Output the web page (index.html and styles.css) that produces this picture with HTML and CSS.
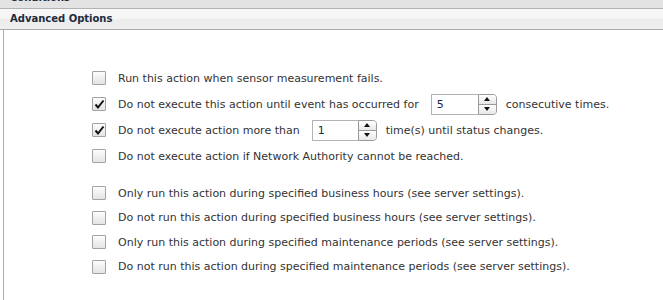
FILE: index.html
```html
<!DOCTYPE html>
<html lang="en">
<head>
    <meta charset="UTF-8">
    <title>Advanced Options</title>
    <link rel="stylesheet" href="styles.css">
</head>
<body>
    <div class="section-head prev">Conditions</div>
    <div class="section-head">Advanced Options</div>

    <div class="section-body">
        <div class="group">
            <label class="opt">
                <span class="box"></span>
                <span>Run this action when sensor measurement fails.</span>
            </label>
            <label class="opt">
                <span class="box checked"><svg width="11" height="11" viewBox="0 0 11 11"><path d="M1.5 5.5 L4 8.5 L9.5 1.5" fill="none" stroke="#111" stroke-width="2"/></svg></span>
                <span>Do not execute this action until event has occurred for</span>
                <span class="spinner wide">
                    <input type="text" value="5">
                    <span class="spin"><span class="up"></span><span class="down"></span></span>
                </span>
                <span>consecutive times.</span>
            </label>
            <label class="opt">
                <span class="box checked"><svg width="11" height="11" viewBox="0 0 11 11"><path d="M1.5 5.5 L4 8.5 L9.5 1.5" fill="none" stroke="#111" stroke-width="2"/></svg></span>
                <span>Do not execute action more than</span>
                <span class="spinner">
                    <input type="text" value="1">
                    <span class="spin"><span class="up"></span><span class="down"></span></span>
                </span>
                <span>time(s) until status changes.</span>
            </label>
            <label class="opt">
                <span class="box"></span>
                <span>Do not execute action if Network Authority cannot be reached.</span>
            </label>
        </div>

        <div class="group second">
            <label class="opt">
                <span class="box"></span>
                <span>Only run this action during specified business hours (see server settings).</span>
            </label>
            <label class="opt">
                <span class="box"></span>
                <span>Do not run this action during specified business hours (see server settings).</span>
            </label>
            <label class="opt">
                <span class="box"></span>
                <span>Only run this action during specified maintenance periods (see server settings).</span>
            </label>
            <label class="opt">
                <span class="box"></span>
                <span>Do not run this action during specified maintenance periods (see server settings).</span>
            </label>
        </div>
    </div>
</body>
</html>
```

FILE: styles.css
```css
body {
    margin: 0;
    font-family: "DejaVu Sans", Verdana, sans-serif;
    font-size: 11px;
    color: #333;
    background: #fff;
    overflow: hidden;
}

.section-head {
    height: 20px;
    line-height: 20px;
    padding-left: 10px;
    font-size: 10px;
    font-weight: bold;
    color: #1c2b3d;
    background: linear-gradient(#f8f8f8, #f4f4f4 50%, #ececec 50%, #efefef);
    border-bottom: 1px solid #a9a9a9;
}

.section-head.prev {
    margin-top: -12px;
    background: #e3e3e3;
    border-bottom: 1px solid #b2b2b2;
}

.section-body {
    box-sizing: border-box;
    height: 270px;
    margin-left: 3px;
    border-left: 1px solid #acacac;
    padding: 35px 0 0 88px;
}

.group {
    display: flex;
    flex-direction: column;
}

.group.second {
    margin-top: 12px;
}

.opt {
    display: flex;
    align-items: center;
    gap: 8px;
    height: 26px;
}

.group.second .opt {
    height: 24.5px;
}

.box {
    width: 12px;
    height: 12px;
    margin-right: 4px;
    border: 1px solid #a3a3a3;
    border-radius: 1px;
    background: linear-gradient(#fdfdfd, #f0f0f0 50%, #e4e4e4);
    display: flex;
    align-items: center;
    justify-content: center;
    flex-shrink: 0;
}

.spinner {
    display: flex;
    align-items: stretch;
    height: 21px;
    margin: 0 1px 0 4px;
}

.spinner input {
    width: 40px;
    padding: 0 0 0 5px;
    border: 1px solid #b3b3b3;
    border-right: none;
    font: inherit;
    color: #1c2b3d;
    outline: none;
}

.spinner.wide input {
    width: 41px;
}

.spin {
    width: 17px;
    display: flex;
    flex-direction: column;
    border: 1px solid #9a9a9a;
    border-radius: 0 4px 4px 0;
    overflow: hidden;
}

.spin span {
    flex: 1;
    display: flex;
    align-items: center;
    justify-content: center;
    background: linear-gradient(#ffffff, #e7e7e7);
}

.spin .up {
    border-bottom: 1px solid #9a9a9a;
}

.spin .up::after,
.spin .down::after {
    content: "";
    border-left: 3px solid transparent;
    border-right: 3px solid transparent;
}

.spin .up::after {
    border-bottom: 4px solid #111;
}

.spin .down::after {
    border-top: 4px solid #111;
}
```
